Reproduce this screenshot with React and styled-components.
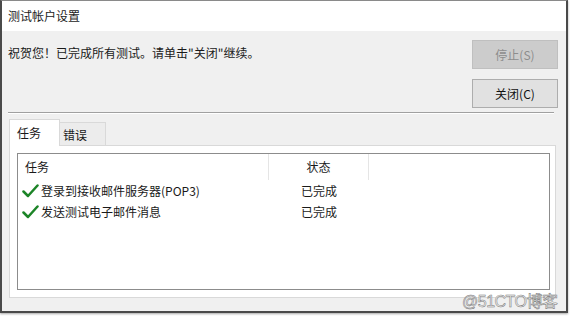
import React from "react";
import styled, { createGlobalStyle } from "styled-components";

const GlobalStyle = createGlobalStyle`
  body {
    margin: 0;
    background: #ffffff;
    font-family: "Noto Sans CJK SC", "Noto Sans", sans-serif;
    font-size: 12px;
    color: #1a1a1a;
  }
`;

const Page = styled.div`
  position: relative;
  width: 570px;
  height: 317px;
  overflow: hidden;
`;

const Window = styled.div`
  width: 568px;
  height: 313px;
  box-sizing: border-box;
  border: 2px solid #4a4a4a;
  border-top: 1px solid #8a8a8a;
  display: flex;
  flex-direction: column;
  box-shadow: 0 1px 2px rgba(0, 0, 0, 0.35);
`;

const TitleBar = styled.div`
  height: 30px;
  background: #ffffff;
  display: flex;
  align-items: center;
  padding-left: 6px;
  font-size: 12px;
  line-height: 14px;
`;

const Body = styled.div`
  flex: 1;
  background: #f0f0f0;
  padding: 9px 8px 0 5px;
  display: flex;
  flex-direction: column;
`;

const TopRow = styled.div`
  display: flex;
  justify-content: space-between;
`;

const Message = styled.div`
  margin-top: 6px;
  padding-left: 1px;
  line-height: 14px;
`;

const ButtonColumn = styled.div`
  display: flex;
  flex-direction: column;
  gap: 10px;
`;

const Button = styled.div`
  width: 86px;
  height: 29px;
  box-sizing: border-box;
  display: flex;
  align-items: center;
  justify-content: center;
  font-size: 12px;
  background: ${(p) => (p.disabled ? "#cccccc" : "#e1e1e1")};
  border: 1px solid ${(p) => (p.disabled ? "#bfbfbf" : "#adadad")};
  color: ${(p) => (p.disabled ? "#8d8d8d" : "#111111")};
`;

const Separator = styled.div`
  margin: 4px 4px 0 1px;
  height: 1px;
  background: #a0a0a0;
  border-bottom: 1px solid #ffffff;
`;

const TabStrip = styled.div`
  margin-top: 5px;
  margin-left: 2px;
  height: 26px;
  display: flex;
  align-items: flex-end;
`;

const Tab = styled.div`
  box-sizing: border-box;
  width: ${(p) => (p.active ? "51px" : "46px")};
  height: ${(p) => (p.active ? "27px" : "23px")};
  background: ${(p) => (p.active ? "#ffffff" : "#ececec")};
  border: 1px solid #d9d9d9;
  border-bottom: none;
  border-left: ${(p) => (p.active ? "1px solid #d9d9d9" : "none")};
  margin-bottom: ${(p) => (p.active ? "-1px" : "0")};
  position: relative;
  z-index: ${(p) => (p.active ? 1 : 0)};
  display: flex;
  align-items: center;
  padding-left: ${(p) => (p.active ? "7px" : "3px")};
  padding-top: ${(p) => (p.active ? "0" : "2px")};
  font-size: 12px;
  line-height: 14px;
`;

const Panel = styled.div`
  margin-left: 2px;
  margin-right: 2px;
  height: 153px;
  box-sizing: border-box;
  background: #ffffff;
  border: 1px solid #d9d9d9;
  padding: 7px 5px 7px 7px;
  display: flex;
`;

const ListBox = styled.div`
  flex: 1;
  border: 1px solid #8c8c8c;
  background: #ffffff;
  display: flex;
  flex-direction: column;
`;

const HeaderRow = styled.div`
  display: flex;
  height: 26px;
  align-items: stretch;
`;

const HeaderCell = styled.div`
  width: ${(p) => p.width}px;
  box-sizing: border-box;
  border-right: 1px solid #e5e5e5;
  display: flex;
  align-items: center;
  justify-content: ${(p) => (p.center ? "center" : "flex-start")};
  padding-left: ${(p) => (p.center ? "0" : "7px")};
  line-height: 14px;
`;

const Row = styled.div`
  display: flex;
  height: 21px;
  align-items: center;
`;

const TaskCell = styled.div`
  width: 251px;
  display: flex;
  align-items: center;
  gap: 2px;
  padding-left: 4px;
  box-sizing: border-box;
  line-height: 14px;
`;

const StatusCell = styled.div`
  width: 100px;
  text-align: center;
  line-height: 14px;
`;

const Watermark = styled.div`
  position: absolute;
  left: 462px;
  top: 292px;
  font-family: "Liberation Sans", "Noto Sans CJK SC", sans-serif;
  font-size: 16px;
  line-height: 20px;
  color: #f2f2f2;
  -webkit-text-stroke: 0.5px #777777;
  letter-spacing: -0.5px;
`;

const Check = () => (
  <svg width="17" height="14" viewBox="0 0 17 14">
    <path
      d="M1.5 7.5 L6 12 L15.5 1.5"
      fill="none"
      stroke="#1c8427"
      strokeWidth="2.5"
      strokeLinecap="round"
      strokeLinejoin="round"
    />
  </svg>
);

const tasks = ["登录到接收邮件服务器(POP3)", "发送测试电子邮件消息"];

export default function App() {
  return (
    <Page>
      <GlobalStyle />
      <Window>
        <TitleBar>测试帐户设置</TitleBar>
        <Body>
          <TopRow>
            <Message>祝贺您！已完成所有测试。请单击"关闭"继续。</Message>
            <ButtonColumn>
              <Button disabled>停止(S)</Button>
              <Button>关闭(C)</Button>
            </ButtonColumn>
          </TopRow>
          <Separator />
          <TabStrip>
            <Tab active>任务</Tab>
            <Tab>错误</Tab>
          </TabStrip>
          <Panel>
            <ListBox>
              <HeaderRow>
                <HeaderCell width={251}>任务</HeaderCell>
                <HeaderCell width={100} center>
                  状态
                </HeaderCell>
              </HeaderRow>
              {tasks.map((t) => (
                <Row key={t}>
                  <TaskCell>
                    <Check />
                    {t}
                  </TaskCell>
                  <StatusCell>已完成</StatusCell>
                </Row>
              ))}
            </ListBox>
          </Panel>
        </Body>
      </Window>
      <Watermark>@51CTO博客</Watermark>
    </Page>
  );
}
